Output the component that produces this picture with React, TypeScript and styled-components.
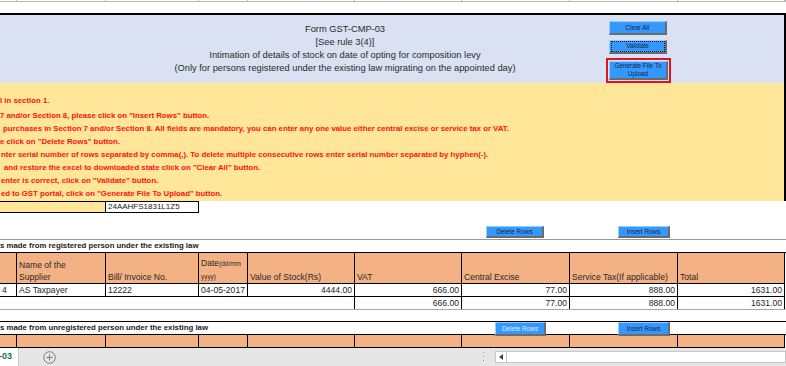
import React from 'react';
import styled, { createGlobalStyle } from 'styled-components';

const COLS = '17px 89px 93px 49px 107px 107px 108px 108px 107px 1px';

const Global = createGlobalStyle`
  html, body { margin: 0; padding: 0; background: #fff; overflow: hidden; }
  body { font-family: "Liberation Sans", Arial, sans-serif; color: #222; }
  * { box-sizing: border-box; }
`;

const Sheet = styled.div`
  width: 786px;
  height: 366px;
  overflow: hidden;
  display: flex;
  flex-direction: column;
`;

const TopStrip = styled.div`
  height: 13px;
  display: grid;
  grid-template-columns: ${COLS};
  align-items: start;
`;

const TopCell = styled.div`
  height: 2px;
  border-right: 1px solid #b8b8b8;
  border-bottom: 1px solid #b8b8b8;
`;

const FormBox = styled.div`
  width: 786px;
  border-top: 2px solid #000;
  border-right: 2px solid #000;
`;

const BlueBand = styled.div`
  height: 68px;
  background: #d9e1f2;
  display: flex;
`;

const TitleBlock = styled.div`
  width: 606px;
  padding: 8px 0 0 84px;
  text-align: center;
  font-size: 9.3px;
  line-height: 13px;
  color: #2a2a2a;
  white-space: nowrap;
`;

const ButtonStack = styled.div`
  display: flex;
  flex-direction: column;
  padding-top: 6px;
`;

const MacroButton = styled.div<{ $w: number; $h: number; $light?: boolean }>`
  width: ${(p) => p.$w}px;
  height: ${(p) => p.$h}px;
  background: #3399ff;
  border-top: 1px solid #9ccbff;
  border-left: 1px solid #9ccbff;
  border-right: 2px solid #6b6b6b;
  border-bottom: 2px solid #6b6b6b;
  display: flex;
  align-items: center;
  justify-content: center;
  text-align: center;
  font-size: 6.4px;
  line-height: 8px;
  color: ${(p) => (p.$light ? '#e4ebf5' : '#1c2340')};
  white-space: nowrap;
`;

const StackButton = styled(MacroButton)<{ $gap?: number }>`
  margin-left: 3px;
  margin-bottom: ${(p) => p.$gap ?? 0}px;
`;

const FocusLabel = styled.span`
  display: block;
  width: 52px;
  height: 9px;
  line-height: 8px;
  outline: 1px dotted #111;
`;

const RedFrame = styled.div`
  width: 65px;
  height: 25px;
  border: 2px solid #e0141e;
  padding: 1px;
`;

const YellowBand = styled.div`
  height: 118px;
  background: #ffe699;
  padding-top: 11px;
`;

const RedLine = styled.div<{ $indent?: number; $after?: number }>`
  height: 13px;
  line-height: 13px;
  padding-left: ${(p) => p.$indent ?? 0}px;
  margin-bottom: ${(p) => p.$after ?? 0}px;
  color: #ff1010;
  font-weight: bold;
  font-size: 7.8px;
  white-space: nowrap;
`;

const GridRow = styled.div<{ $h: number; $bottom?: string }>`
  display: grid;
  grid-template-columns: ${COLS};
  height: ${(p) => p.$h}px;
  ${(p) => (p.$bottom ? `border-bottom: 1px solid ${p.$bottom};` : '')}
`;

const InputLabel = styled.div`
  grid-column: span 2;
  background: #ffe699;
  border-top: 1px solid #000;
  border-bottom: 1px solid #000;
  border-right: 1px solid #000;
`;

const InputCell = styled.div`
  border-top: 1px solid #000;
  border-bottom: 1px solid #000;
  border-right: 1px solid #000;
  font-size: 8px;
  line-height: 10px;
  padding-left: 2px;
`;

const Spacer = styled.div<{ $h: number }>`
  height: ${(p) => p.$h}px;
`;

const ButtonRow = styled.div`
  height: 13px;
  display: flex;
  padding-left: 486px;
  gap: 74px;
`;

const SectionTitle = styled.div<{ $topColor: string }>`
  height: 14px;
  border-top: 1px solid ${(p) => p.$topColor};
  border-bottom: 1px solid #000;
  font-weight: bold;
  font-size: 7.8px;
  line-height: 12px;
  white-space: nowrap;
  color: #1a1a1a;
`;

const HeadCell = styled.div`
  background: #f4b183;
  border-right: 1px solid #000;
  border-bottom: 1px solid #000;
  display: flex;
  flex-direction: column;
  justify-content: flex-end;
  padding-left: 2px;
  font-size: 8.6px;
  line-height: 12px;
  color: #2a2a2a;
  white-space: nowrap;
  overflow: hidden;
`;

const Small = styled.span`
  font-size: 6.4px;
`;

const Cell = styled.div<{ $right?: boolean; $plain?: boolean; $edge?: boolean }>`
  border-right: ${(p) => (p.$plain && !p.$edge ? 'none' : '1px solid #000')};
  border-bottom: ${(p) => (p.$plain ? 'none' : '1px solid #000')};
  font-size: 8.6px;
  line-height: 12px;
  padding: 0 2px;
  text-align: ${(p) => (p.$right ? 'right' : 'left')};
  white-space: nowrap;
  overflow: hidden;
  color: #1e1e1e;
`;

const Section = styled.div`
  position: relative;
`;

const Floating = styled(MacroButton)<{ $left: number }>`
  position: absolute;
  top: 1px;
  left: ${(p) => p.$left}px;
`;

const TabBar = styled.div`
  flex: 1;
  display: flex;
  background: #e6e6e6;
  align-items: stretch;
`;

const SheetTab = styled.div`
  width: 20px;
  background: #fff;
  color: #1e7145;
  font-weight: bold;
  font-size: 9px;
  line-height: 17px;
  padding-left: 0;
  margin-left: -1px;
  border-right: 1px solid #c8c8c8;
  white-space: nowrap;
  overflow: hidden;
`;

const AddArea = styled.div`
  width: 463px;
  display: flex;
  align-items: center;
  padding-left: 24px;
`;

const Handle = styled.div`
  width: 13px;
  display: flex;
  align-items: center;
`;

const ScrollTrack = styled.div`
  flex: 1;
  margin: 3px 0 3px 0;
  background: #fff;
  border: 1px solid #c6c6c6;
  display: flex;
`;

const ArrowBox = styled.div`
  width: 11px;
  border-right: 1px solid #c6c6c6;
  display: flex;
  align-items: center;
  justify-content: center;
`;

const redLines: { t: string; indent?: number; after?: number }[] = [
  { t: 'l in section 1.', after: 2 },
  { t: '7 and/or Section 8, please click on "Insert Rows" button.' },
  { t: 'purchases in Section 7 and/or Section 8. All fields are mandatory, you can enter any one value either central excise or service tax or VAT.', indent: 3 },
  { t: 'e click on "Delete Rows" button.' },
  { t: 'nter serial number of rows separated by comma(,). To delete multiple consecutive rows enter serial number separated by hyphen(-).', indent: 1 },
  { t: 'and restore the excel to downloaded state click on "Clear All" button.', indent: 4 },
  { t: 'enter is correct, click on "Validate" button.', indent: 1 },
  { t: 'ed to GST portal, click on "Generate File To Upload" button.', indent: 1 },
];

const blanks = (n: number) => Array.from({ length: n }, (_, i) => <HeadCell key={i} />);

export default function App() {
  return (
    <>
      <Global />
      <Sheet>
        <TopStrip>
          {Array.from({ length: 10 }, (_, i) => (
            <TopCell key={i} />
          ))}
        </TopStrip>

        <FormBox>
          <BlueBand>
            <TitleBlock>
              <div>Form GST-CMP-03</div>
              <div>[See rule 3(4)]</div>
              <div>Intimation of details of stock on date of opting for composition levy</div>
              <div>(Only for persons registered under the existing law migrating on the appointed day)</div>
            </TitleBlock>
            <ButtonStack>
              <StackButton $w={58} $h={14} $gap={5}>Clear All</StackButton>
              <StackButton $w={58} $h={14} $gap={4}>
                <FocusLabel>Validate</FocusLabel>
              </StackButton>
              <RedFrame>
                <MacroButton $w={59} $h={19}>
                  Generate File To
                  <br />
                  Upload
                </MacroButton>
              </RedFrame>
            </ButtonStack>
          </BlueBand>
          <YellowBand>
            {redLines.map((l, i) => (
              <RedLine key={i} $indent={l.indent} $after={l.after}>
                {l.t}
              </RedLine>
            ))}
          </YellowBand>
        </FormBox>

        <GridRow $h={12}>
          <InputLabel />
          <InputCell>24AAHFS1831L1Z5</InputCell>
        </GridRow>

        <Spacer $h={13} />
        <ButtonRow>
          <MacroButton $w={58} $h={12}>Delete Rows</MacroButton>
          <MacroButton $w={52} $h={12}>Insert Rows</MacroButton>
        </ButtonRow>

        <SectionTitle $topColor="#9a9a9a">s made from registered person under the existing law</SectionTitle>
        <GridRow $h={31}>
          <HeadCell />
          <HeadCell>
            <div>Name of the</div>
            <div>Supplier</div>
          </HeadCell>
          <HeadCell>Bill/ Invoice No.</HeadCell>
          <HeadCell>
            <div>
              Date<Small>(dd/mm</Small>
            </div>
            <div>
              <Small>yyyy)</Small>
            </div>
          </HeadCell>
          <HeadCell>Value of Stock(Rs)</HeadCell>
          <HeadCell>VAT</HeadCell>
          <HeadCell>Central Excise</HeadCell>
          <HeadCell>Service Tax(If applicable)</HeadCell>
          <HeadCell>Total</HeadCell>
        </GridRow>
        <GridRow $h={13}>
          <Cell>4</Cell>
          <Cell>AS Taxpayer</Cell>
          <Cell>12222</Cell>
          <Cell>04-05-2017</Cell>
          <Cell $right>4444.00</Cell>
          <Cell $right>666.00</Cell>
          <Cell $right>77.00</Cell>
          <Cell $right>888.00</Cell>
          <Cell $right>1631.00</Cell>
        </GridRow>
        <GridRow $h={13} $bottom="#a8a8a8">
          <Cell $plain />
          <Cell $plain />
          <Cell $plain />
          <Cell $plain />
          <Cell $plain $edge />
          <Cell $right $plain $edge>666.00</Cell>
          <Cell $right $plain $edge>77.00</Cell>
          <Cell $right $plain $edge>888.00</Cell>
          <Cell $right $plain $edge>1631.00</Cell>
        </GridRow>

        <Spacer $h={11} />
        <Section>
          <SectionTitle $topColor="#000">s made from unregistered person under the existing law</SectionTitle>
          <GridRow $h={13}>{blanks(9)}</GridRow>
          <Floating $left={495} $w={51} $h={14} $light>
            Delete Rows
          </Floating>
          <Floating $left={618} $w={52} $h={14}>
            Insert Rows
          </Floating>
        </Section>

        <TabBar>
          <SheetTab>-03</SheetTab>
          <AddArea>
            <svg width="13" height="13" viewBox="0 0 13 13">
              <circle cx="6.5" cy="6.5" r="5.8" fill="none" stroke="#7a7a7a" strokeWidth="1" />
              <path d="M6.5 3.5v6M3.5 6.5h6" stroke="#7a7a7a" strokeWidth="1" />
            </svg>
          </AddArea>
          <Handle>
            <svg width="3" height="12" viewBox="0 0 3 12">
              <rect x="1" y="1" width="1" height="1" fill="#9a9a9a" />
              <rect x="1" y="5" width="1" height="1" fill="#9a9a9a" />
              <rect x="1" y="9" width="1" height="1" fill="#9a9a9a" />
            </svg>
          </Handle>
          <ScrollTrack>
            <ArrowBox>
              <svg width="4" height="6" viewBox="0 0 4 6">
                <path d="M4 0L0 3L4 6Z" fill="#444" />
              </svg>
            </ArrowBox>
          </ScrollTrack>
        </TabBar>
      </Sheet>
    </>
  );
}
